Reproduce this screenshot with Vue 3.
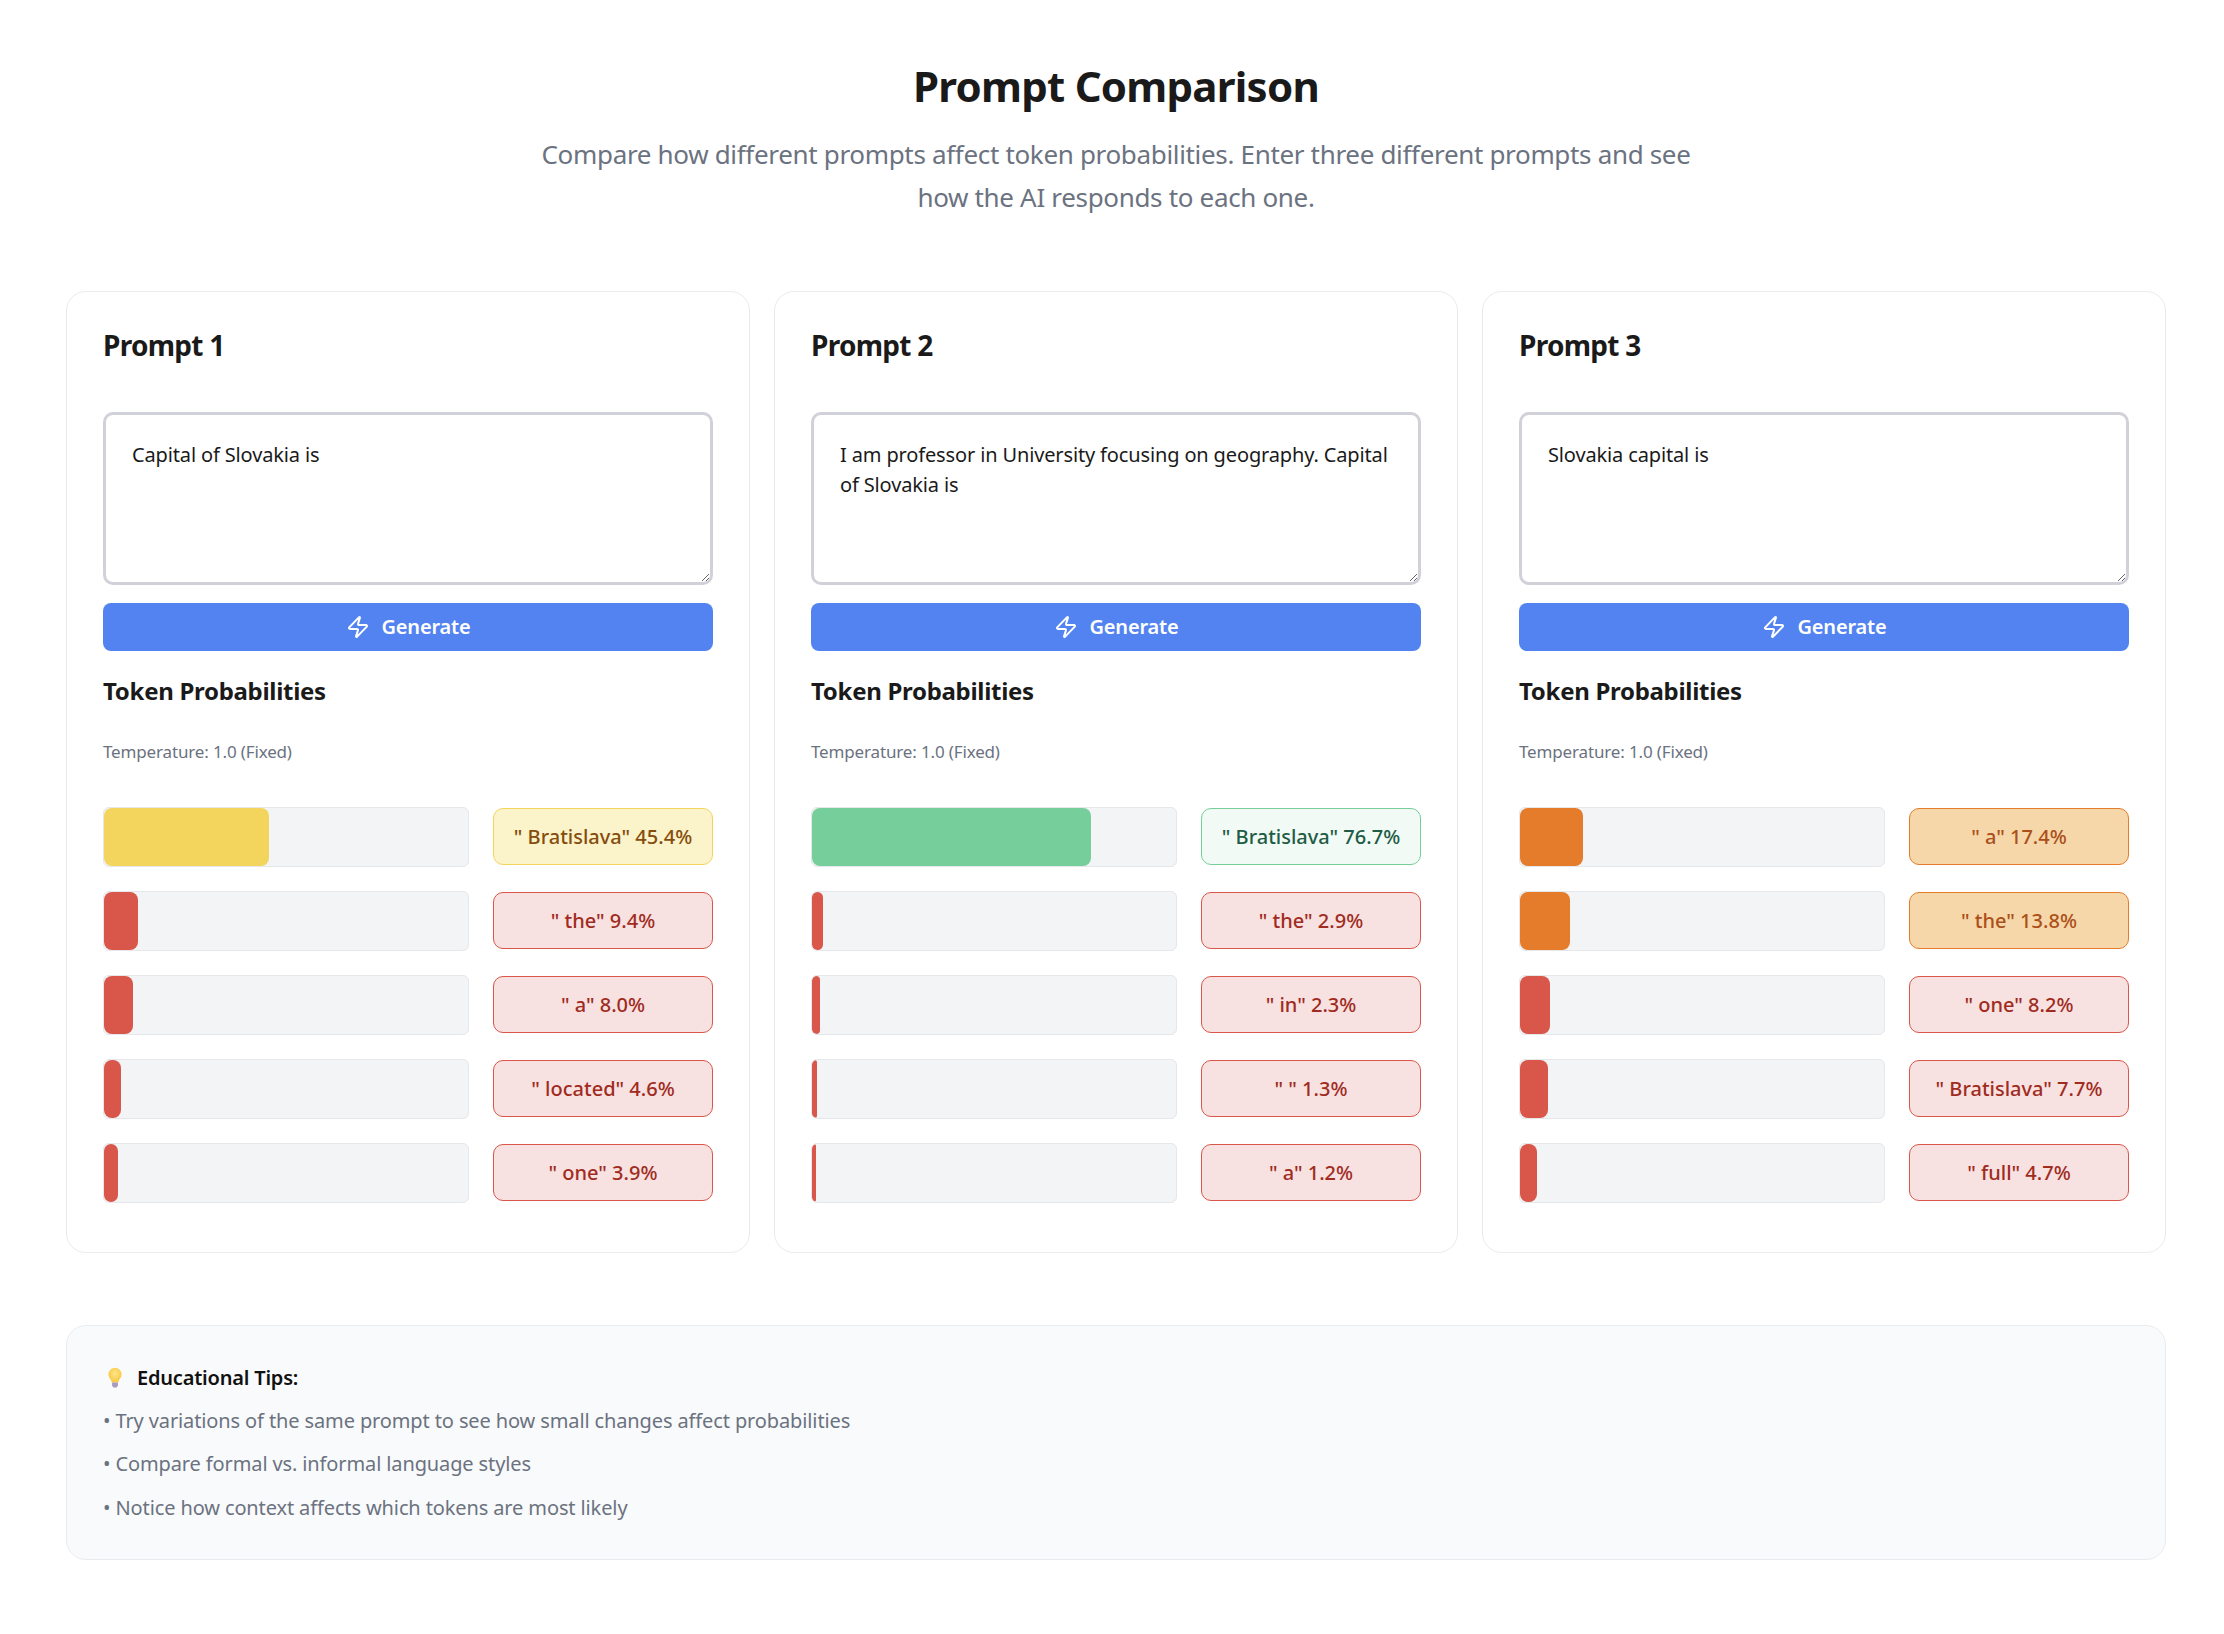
<template>
  <div class="page">
    <header class="head">
      <h1 class="title">Prompt Comparison</h1>
      <p class="sub">Compare how different prompts affect token probabilities. Enter three different prompts and see how the AI responds to each one.</p>
    </header>

    <div class="cards">
      <section v-for="(card, i) in cards" :key="i" class="card">
        <h2 class="card-title">Prompt {{ i + 1 }}</h2>
        <textarea class="prompt" :value="card.prompt"></textarea>
        <button class="generate" type="button">
          <svg class="zap" viewBox="0 0 24 24" fill="none" stroke="currentColor" stroke-width="2" stroke-linecap="round" stroke-linejoin="round">
            <path d="M4 14a1 1 0 0 1-.78-1.63l9.9-10.2a.5.5 0 0 1 .86.46l-1.92 6.02A1 1 0 0 0 13 10h7a1 1 0 0 1 .78 1.63l-9.9 10.2a.5.5 0 0 1-.86-.46l1.92-6.02A1 1 0 0 0 11 14z" />
          </svg>
          <span>Generate</span>
        </button>
        <h3 class="tp-title">Token Probabilities</h3>
        <p class="temp">Temperature: 1.0 (Fixed)</p>
        <div class="rows">
          <div v-for="t in card.tokens" :key="t.token" class="row">
            <div class="bar">
              <div class="fill" :class="level(t.p)" :style="{ width: t.p + '%' }"></div>
            </div>
            <div class="chip" :class="level(t.p)">"{{ t.token }}" {{ t.p.toFixed(1) }}%</div>
          </div>
        </div>
      </section>
    </div>

    <div class="tips">
      <div class="tips-head">
        <svg class="bulb" viewBox="0 0 20 30">
          <defs>
            <radialGradient id="glass" cx="50%" cy="40%" r="60%">
              <stop offset="0" stop-color="#fde68a" />
              <stop offset="1" stop-color="#f8c63d" />
            </radialGradient>
          </defs>
          <path d="M10 1a9 9 0 0 0-9 9c0 3.6 2 5.4 3.4 7.6.8 1.3 1 2.4 1.1 3.4h9c.1-1 .3-2.1 1.1-3.4C17 15.4 19 13.600 19 10a9 9 0 0 0-9-9z" fill="url(#glass)" />
          <path d="M6 21h8v4.500l-2 2.500H8l-2-2.500z" fill="#a99ac2" />
        </svg>
        <span>Educational Tips:</span>
      </div>
      <p v-for="tip in tips" :key="tip" class="tip">• {{ tip }}</p>
    </div>
  </div>
</template>

<script setup>
const cards = [
  {
    prompt: "Capital of Slovakia is",
    tokens: [
      { token: " Bratislava", p: 45.4 },
      { token: " the", p: 9.4 },
      { token: " a", p: 8.0 },
      { token: " located", p: 4.6 },
      { token: " one", p: 3.9 }
    ]
  },
  {
    prompt: "I am professor in University focusing on geography. Capital of Slovakia is",
    tokens: [
      { token: " Bratislava", p: 76.7 },
      { token: " the", p: 2.9 },
      { token: " in", p: 2.3 },
      { token: " ", p: 1.3 },
      { token: " a", p: 1.2 }
    ]
  },
  {
    prompt: "Slovakia capital is",
    tokens: [
      { token: " a", p: 17.4 },
      { token: " the", p: 13.8 },
      { token: " one", p: 8.2 },
      { token: " Bratislava", p: 7.7 },
      { token: " full", p: 4.7 }
    ]
  }
];

const tips = [
  "Try variations of the same prompt to see how small changes affect probabilities",
  "Compare formal vs. informal language styles",
  "Notice how context affects which tokens are most likely"
];

const level = (p) => {
  if (p >= 60) return "high";
  if (p >= 30) return "mid";
  if (p >= 10) return "low";
  return "min";
};
</script>

<style scoped>
.page {
  padding: 56px 58px 48px 66px;
  font-family: "Noto Sans", "Liberation Sans", sans-serif;
  color: #111;
  background: #fff;
}

.head { text-align: center; margin-bottom: 72px; }
.title { margin: 0 0 17px; font-size: 42px; line-height: 60px; font-weight: 700; color: #1a1a1a; letter-spacing: -0.75px; }
.sub { margin: 0 auto; max-width: 1200px; font-size: 26px; line-height: 43px; color: #6b7280; letter-spacing: -0.33px; }

.cards {
  display: grid;
  grid-template-columns: repeat(3, 1fr);
  gap: 24px;
}

.card {
  border: 1.5px solid #e9ebef;
  border-radius: 20px;
  padding: 34.5px 36px 49px;
  background: #fff;
}

.card-title { margin: 0 0 48px; font-size: 28px; line-height: 37px; font-weight: 700; color: #1a1a1a; letter-spacing: -0.7px; }

.prompt {
  display: block;
  box-sizing: border-box;
  width: 100%;
  height: 173px;
  padding: 25px 26px 24px;
  border: 3px solid #d1d1d9;
  border-radius: 10px;
  outline: none;
  font-family: inherit;
  font-size: 20px;
  line-height: 30px;
  letter-spacing: -0.14px;
  color: #1a1a1a;
  background: #fff;
}

.generate {
  display: flex;
  align-items: center;
  justify-content: center;
  gap: 12px;
  width: 100%;
  height: 48px;
  margin-top: 18px;
  border: none;
  border-radius: 8px;
  background: #5383f1;
  color: #fff;
  font-family: inherit;
  font-size: 20px;
  font-weight: 600;
  letter-spacing: -0.2px;
}

.zap { width: 24px; height: 24px; }

.tp-title { margin: 23px 0 0; font-size: 24px; line-height: 34px; font-weight: 700; color: #1a1a1a; letter-spacing: -0.3px; }
.temp { margin: 30.5px 0 0; font-size: 17px; line-height: 28px; color: #6b7280; letter-spacing: -0.15px; }

.rows { display: flex; flex-direction: column; gap: 24px; margin-top: 40.5px; }
.row { display: grid; grid-template-columns: 1fr 220px; gap: 24px; align-items: center; }

.bar {
  box-sizing: border-box;
  height: 60px;
  border: 1px solid #e5e7eb;
  border-radius: 6px;
  background: #f3f4f6;
  overflow: hidden;
}

.fill { height: 100%; border-radius: 8px; }
.fill.high { background: #76cf9a; }
.fill.mid { background: #f3d45c; }
.fill.low { background: #e47c2c; }
.fill.min { background: #d9564a; }

.chip {
  box-sizing: border-box;
  height: 57px;
  display: flex;
  align-items: center;
  justify-content: center;
  border: 1.4px solid;
  border-radius: 10px;
  font-size: 20px;
  font-weight: 500;
  white-space: pre;
}

.chip.high { background: #f1faf5; border-color: #76cf9a; color: #1f5c45; }
.chip.mid { background: #fbf3c9; border-color: #f3d45c; color: #854d0e; }
.chip.low { background: #f5d7a9; border-color: #e47c2c; color: #ac4f1a; }
.chip.min { background: #f8e1e1; border-color: #d9564a; color: #9f2c1e; }

.tips {
  margin-top: 72px;
  padding: 36px 36px 35px;
  border: 1.5px solid #e9ebef;
  border-radius: 20px;
  background: #f9fafb;
}

.tips-head { display: flex; align-items: center; gap: 14px; font-size: 20px; line-height: 32px; font-weight: 600; color: #111; padding-left: 4px; letter-spacing: -0.2px; }
.bulb { width: 16px; height: 22px; }
.tip { margin: 11.4px 0 0; font-size: 20px; line-height: 32px; color: #6b7280; letter-spacing: -0.12px; }
</style>

<style>
html, body { background: #fff; }
</style>
